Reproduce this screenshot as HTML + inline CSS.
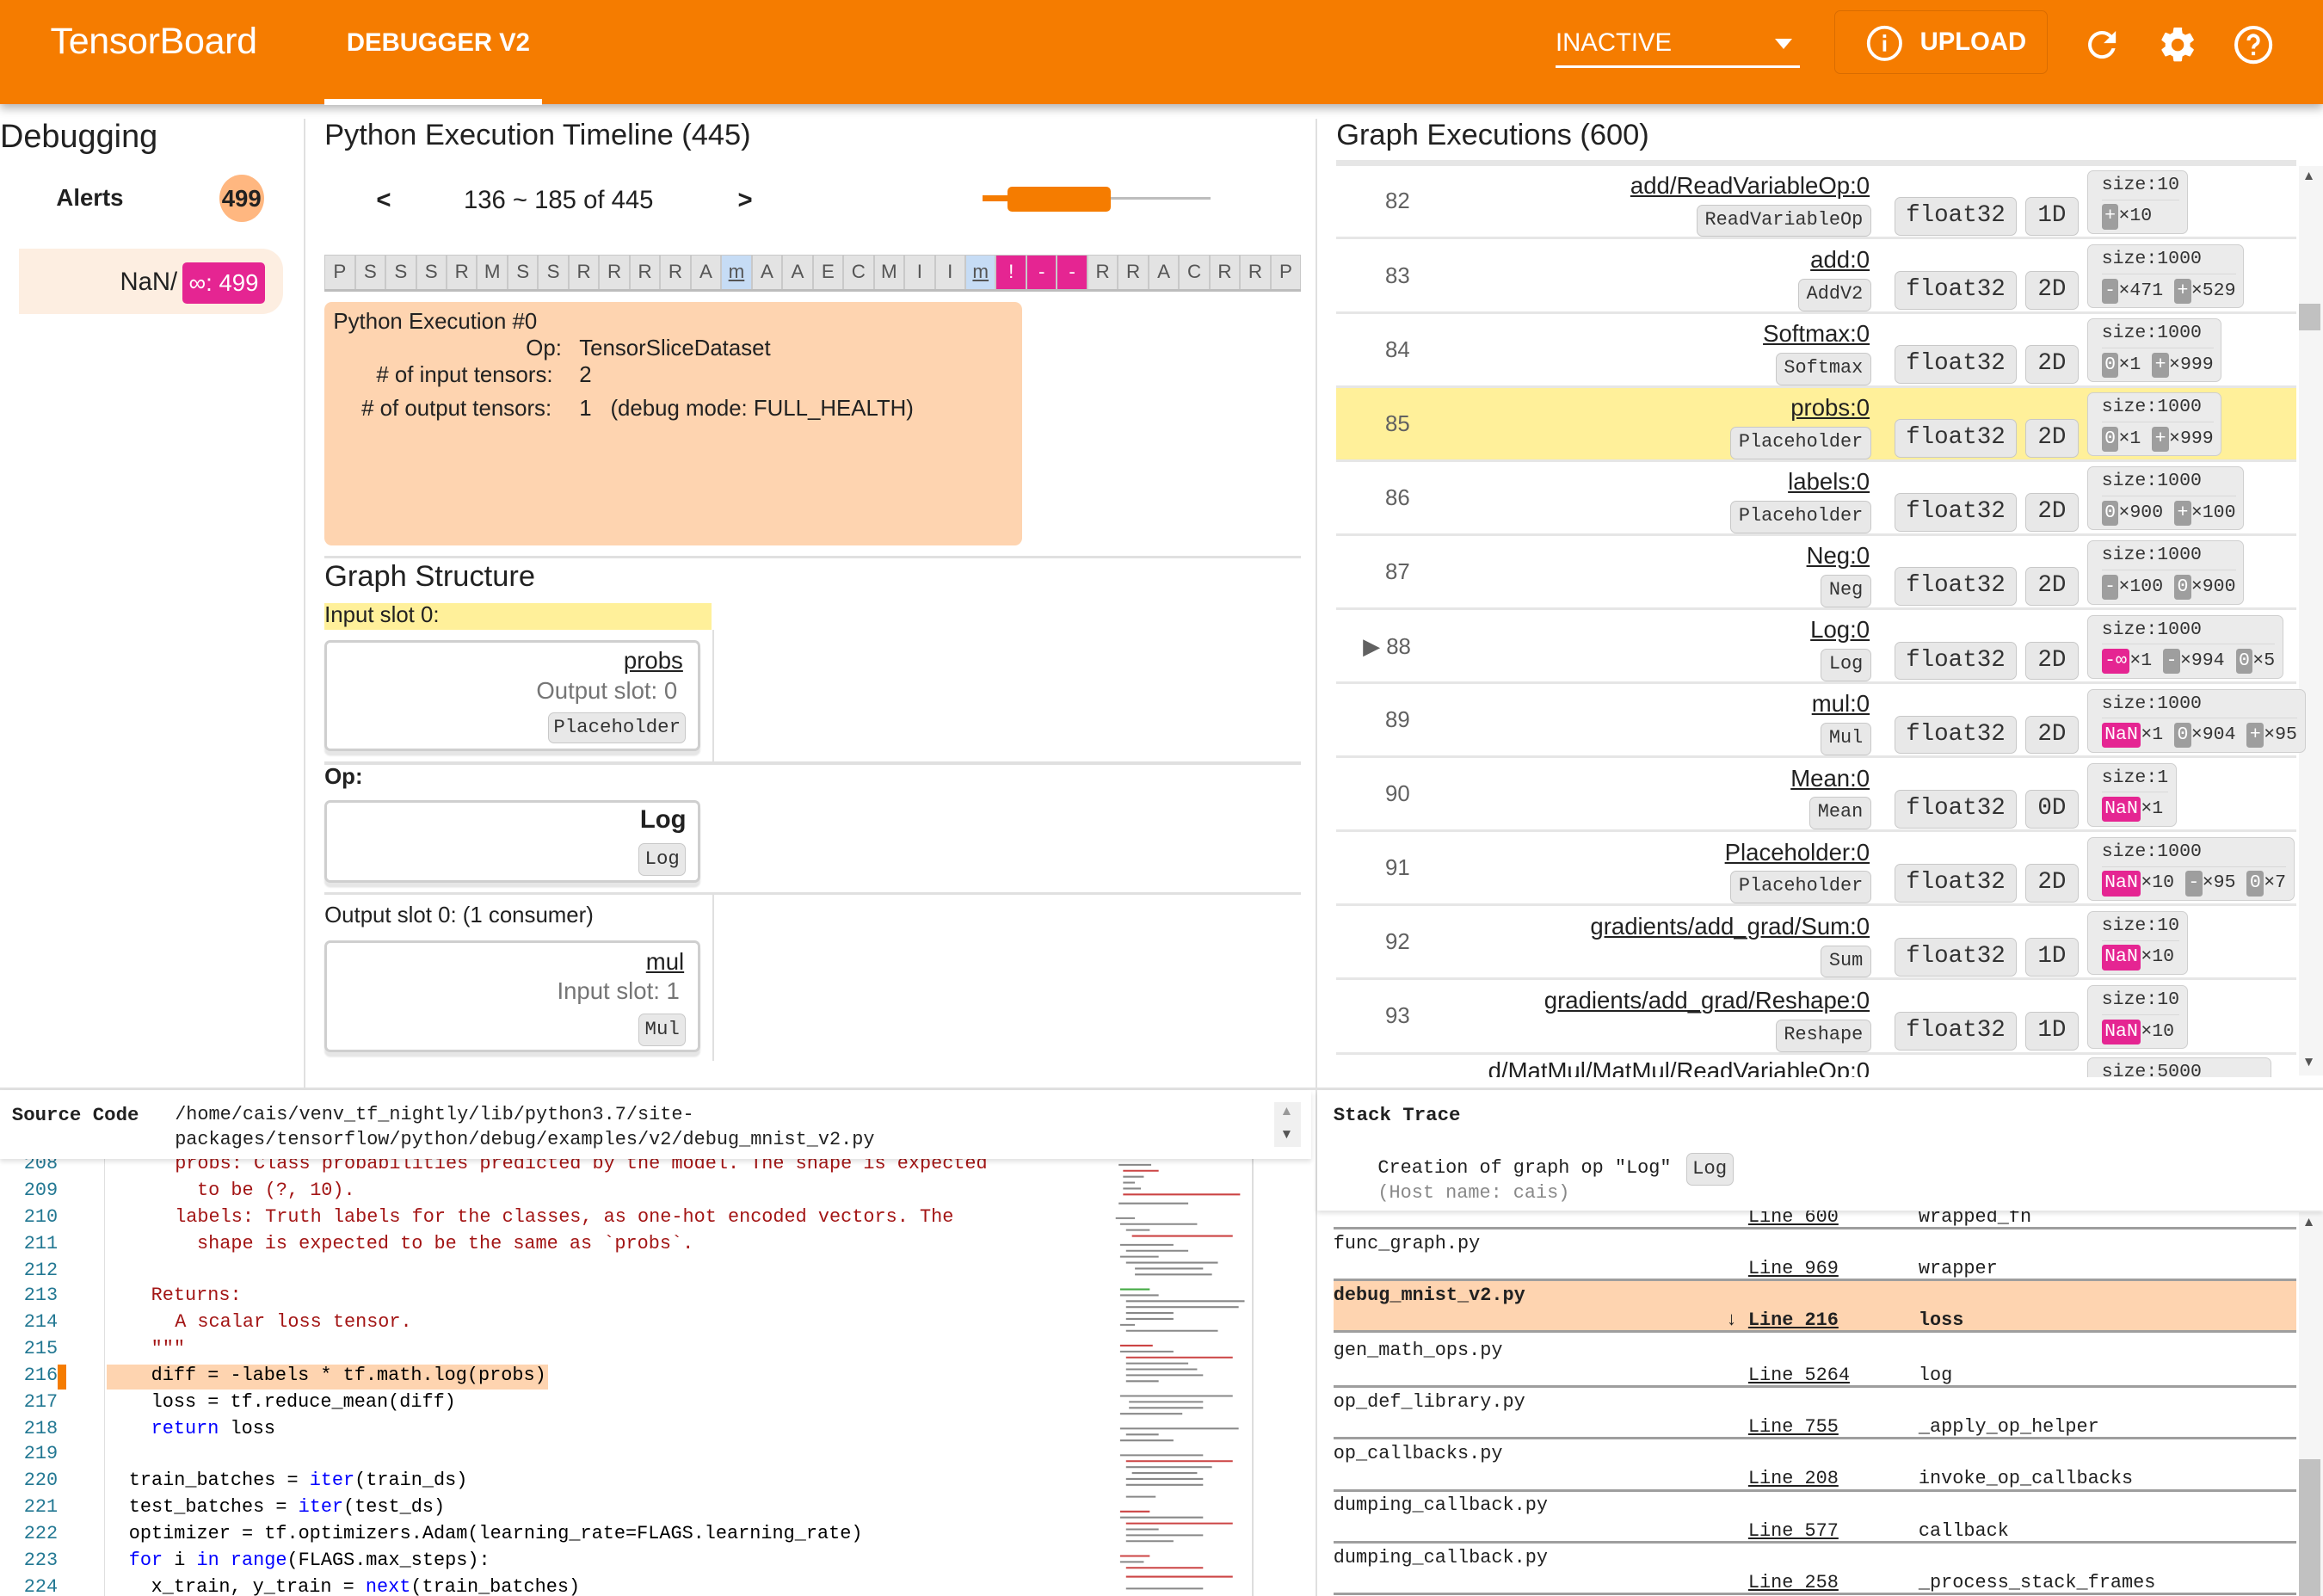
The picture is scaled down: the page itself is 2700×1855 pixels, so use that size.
<!DOCTYPE html>
<html><head><meta charset="utf-8">
<style>
html,body{margin:0;padding:0;width:2700px;height:1854px;overflow:hidden;background:#fff}
#w{position:absolute;left:0;top:0;width:1568px;height:1077px;zoom:1.72194;font-family:"Liberation Sans",sans-serif;color:#212121;overflow:hidden}
.a{position:absolute;white-space:nowrap}
.m{font-family:"Liberation Mono",monospace}
.chip{position:absolute;background:#e8e8e8;border:1px solid #c8c8c8;border-radius:4px;font-family:"Liberation Mono",monospace;color:#333;box-sizing:border-box;text-align:center;white-space:nowrap}
.u{text-decoration:underline}
.row{position:absolute;left:902px;width:648px;height:48px;border-bottom:2px solid #e6e6e6}
.row .idx{position:absolute;left:33px;top:16px;font-size:15px;color:#616161}
.row .nm{position:absolute;right:288px;top:4px;font-size:16px;text-decoration:underline;color:#212121;white-space:nowrap}
.row .op{top:26px;right:287px;height:22px;font-size:12.7px;line-height:20px;padding:0 5px}
.row .f{left:377px;top:21px;width:82px;height:26px;font-size:16px;line-height:24px}
.row .d{left:465px;top:21px;width:36px;height:26px;font-size:16px;line-height:24px}
.sz{position:absolute;left:507px;top:3px;height:43px;background:#ebebeb;border:1px solid #cfcfcf;border-radius:4px;box-sizing:border-box;font-family:"Liberation Mono",monospace;font-size:12.5px;color:#333;padding:0 5px 0 9px;white-space:nowrap}
.sz .t{height:19px;line-height:19px;border-bottom:1px solid #d8d8d8}
.sz .b{line-height:20px;margin-top:1px}
.g{display:inline-block;background:#9e9e9e;color:#fff;border-radius:2px;padding:0 2px;line-height:17px}
.p{display:inline-block;background:#e52592;color:#fff;border-radius:2px;padding:0 2px;line-height:17px}
.tl{position:absolute;top:172px;height:24px;width:20.6px;box-sizing:border-box;background:#e3e3e3;border:1px solid #c9c9c9;text-align:center;font-size:13px;line-height:22px;color:#555}
.card{position:absolute;left:219px;width:254px;background:#fff;border:2px solid #cfcfcf;border-radius:4px;box-sizing:border-box;box-shadow:0 3px 1px #e6e6e6}
.ln{position:absolute;left:0;width:39px;text-align:right;color:#237893;font-family:"Liberation Mono",monospace;font-size:12.7px}
.cd{position:absolute;font-family:"Liberation Mono",monospace;font-size:12.7px;white-space:pre;color:#000}
.r{color:#a31515}.k{color:#0000ff}
.st{position:absolute;left:900px;width:650px;height:33px;border-bottom:2px solid #9e9e9e;font-family:"Liberation Mono",monospace;font-size:12.7px}
.st .fn{position:absolute;left:0;top:2px}
.st .li{position:absolute;left:280px;top:19px;text-decoration:underline}
.st .fu{position:absolute;left:395px;top:19px}
</style></head><body><div id="w">

<!-- header -->
<div class="a" style="left:0;top:0;width:1568px;height:70px;background:#f57c00;box-shadow:0 3px 6px rgba(0,0,0,.3)"></div>
<div class="a" style="left:34px;top:14px;font-size:25px;color:#fff;letter-spacing:-0.2px">TensorBoard</div>
<div class="a" style="left:234px;top:20px;font-size:17px;color:#fff;font-weight:bold">DEBUGGER V2</div>
<div class="a" style="left:219px;top:67px;width:147px;height:4px;background:#fff"></div>
<div class="a" style="left:1050px;top:20px;font-size:17px;color:#fff">INACTIVE</div>
<div class="a" style="left:1198px;top:26px;width:0;height:0;border-left:6px solid transparent;border-right:6px solid transparent;border-top:7px solid #fff"></div>
<div class="a" style="left:1050px;top:44px;width:165px;height:2px;background:#fff"></div>
<div class="a" style="left:1238px;top:7px;width:144px;height:43px;border:1px solid #d96c00;border-radius:4px;box-sizing:border-box"></div>
<svg class="a" style="left:1259px;top:16px" width="26" height="26" viewBox="0 0 24 24"><circle cx="12" cy="12" r="10" fill="none" stroke="#fff" stroke-width="2"/><rect x="11" y="10" width="2" height="7" fill="#fff"/><rect x="11" y="6.5" width="2" height="2" fill="#fff"/></svg>
<div class="a" style="left:1296px;top:19px;font-size:17px;color:#fff;font-weight:bold">UPLOAD</div>
<svg class="a" style="left:1405px;top:16px" width="28" height="28" viewBox="0 0 24 24"><path fill="#fff" d="M17.65 6.35A7.96 7.96 0 0 0 12 4a8 8 0 1 0 7.73 10h-2.08A6 6 0 1 1 12 6c1.66 0 3.140.69 4.22 1.78L13 11h7V4l-2.35 2.35z"/></svg>
<svg class="a" style="left:1456px;top:16px" width="28" height="28" viewBox="0 0 24 24"><path fill="#fff" d="M19.14 12.94a7.1 7.1 0 0 0 0-1.88l2.03-1.58a.5.5 0 0 0 .12-.61l-1.92-3.32a.5.5 0 0 0-.59-.22l-2.39.96a7 7 0 0 0-1.62-.94l-.36-2.54A.48.48 0 0 0 13.930 2h-3.840a.48.48 0 0 0-.48.41l-.36 2.54c-.59.24-1.13.57-1.62.94l-2.39-.96a.49.49 0 0 0-.59.22L2.73 8.87a.49.49 0 0 0 .12.61l2.03 1.58a7.3 7.3 0 0 0 0 1.88l-2.03 1.58a.5.5 0 0 0-.12.61l1.92 3.32c.12.22.37.29.59.22l2.39-.96c.5.38 1.03.7 1.62.94l.36 2.54c.05.24.24.41.48.41h3.84c.24 0 .44-.17.47-.41l.36-2.54c.59-.24 1.13-.56 1.62-.94l2.39.96c.22.08.47 0 .59-.22l1.92-3.32a.49.49 0 0 0-.12-.61l-2.01-1.58zM12 15.6A3.6 3.6 0 1 1 12 8.4a3.6 3.6 0 0 1 0 7.2z"/></svg>
<svg class="a" style="left:1507px;top:16px" width="28" height="28" viewBox="0 0 24 24"><circle cx="12" cy="12" r="10" fill="none" stroke="#fff" stroke-width="2"/><path d="M9.2 9.5a2.8 2.8 0 1 1 4.3 2.3c-.9.6-1.5 1.1-1.5 2.4" fill="none" stroke="#fff" stroke-width="2"/><rect x="11" y="16" width="2" height="2" fill="#fff"/></svg>

<!-- left panel -->
<div class="a" style="left:205px;top:80px;width:1px;height:655px;background:#e0e0e0"></div>
<div class="a" style="left:0;top:80px;font-size:22px">Debugging</div>
<div class="a" style="left:38px;top:124px;font-size:16px;font-weight:bold">Alerts</div>
<div class="a" style="left:148px;top:118px;width:30px;height:32px;border-radius:50%;background:#ffb780;text-align:center;line-height:32px;font-size:16px;font-weight:bold">499</div>
<div class="a" style="left:13px;top:168px;width:178px;height:44px;background:#fdeee1;border-radius:0 14px 14px 0"></div>
<div class="a" style="left:81px;top:181px;font-size:17px">NaN/</div>
<div class="a" style="left:123px;top:177px;width:56px;height:28px;background:#e52592;border-radius:3px;color:#fff;font-size:16px;line-height:28px;text-align:center">∞: 499</div>

<!-- middle -->
<div class="a" style="left:219px;top:80px;font-size:20px">Python Execution Timeline (445)</div>
<div class="a" style="left:254px;top:126px;font-size:17px;font-weight:bold">&lt;</div>
<div class="a" style="left:313px;top:126px;font-size:17px">136 ~ 185 of 445</div>
<div class="a" style="left:498px;top:126px;font-size:17px;font-weight:bold">&gt;</div>
<div class="a" style="left:663px;top:133px;width:154px;height:2px;background:#bdbdbd"></div>
<div class="a" style="left:663px;top:132px;width:30px;height:4px;background:#f57c00"></div>
<div class="a" style="left:680px;top:126px;width:70px;height:17px;background:#f57c00;border-radius:3px"></div>

<div class="tl" style="left:219px">P</div><div class="tl" style="left:239.6px">S</div><div class="tl" style="left:260.2px">S</div><div class="tl" style="left:280.8px">S</div><div class="tl" style="left:301.4px">R</div><div class="tl" style="left:322px">M</div><div class="tl" style="left:342.6px">S</div><div class="tl" style="left:363.2px">S</div><div class="tl" style="left:383.8px">R</div><div class="tl" style="left:404.4px">R</div><div class="tl" style="left:425px">R</div><div class="tl" style="left:445.6px">R</div><div class="tl" style="left:466.2px">A</div><div class="tl" style="left:486.8px;background:#c6dcf5;text-decoration:underline">m</div><div class="tl" style="left:507.4px">A</div><div class="tl" style="left:528px">A</div><div class="tl" style="left:548.6px">E</div><div class="tl" style="left:569.2px">C</div><div class="tl" style="left:589.8px">M</div><div class="tl" style="left:610.4px">I</div><div class="tl" style="left:631px">I</div><div class="tl" style="left:651.6px;background:#c6dcf5;text-decoration:underline">m</div><div class="tl" style="left:672.2px;background:#e52592;color:#fff">!</div><div class="tl" style="left:692.8px;background:#e52592;color:#fff">-</div><div class="tl" style="left:713.4px;background:#e52592;color:#fff">-</div><div class="tl" style="left:734px">R</div><div class="tl" style="left:754.6px">R</div><div class="tl" style="left:775.2px">A</div><div class="tl" style="left:795.8px">C</div><div class="tl" style="left:816.4px">R</div><div class="tl" style="left:837px">R</div><div class="tl" style="left:857.6px">P</div>
<div class="a" style="left:219px;top:195px;width:659px;height:2px;background:#bdbdbd"></div>

<div class="a" style="left:219px;top:204px;width:471px;height:164px;background:#fed4b0;border-radius:5px"></div>
<div class="a" style="left:225px;top:209px;font-size:15px">Python Execution #0</div>
<div class="a" style="left:355px;top:227px;font-size:15px">Op:</div>
<div class="a" style="left:391px;top:227px;font-size:15px">TensorSliceDataset</div>
<div class="a" style="left:254px;top:245px;font-size:15px"># of input tensors:</div>
<div class="a" style="left:391px;top:245px;font-size:15px">2</div>
<div class="a" style="left:244px;top:268px;font-size:15px"># of output tensors:</div>
<div class="a" style="left:391px;top:268px;font-size:15px">1</div>
<div class="a" style="left:412px;top:268px;font-size:15px">(debug mode: FULL_HEALTH)</div>

<div class="a" style="left:219px;top:375px;width:659px;height:2px;background:#e0e0e0"></div>
<div class="a" style="left:219px;top:378px;font-size:20px">Graph Structure</div>
<div class="a" style="left:219px;top:407px;width:261px;height:18px;background:#fff09a"></div>
<div class="a" style="left:219px;top:407px;font-size:15px">Input slot 0:</div>
<div class="a" style="left:481px;top:425px;width:1px;height:90px;background:#e0e0e0"></div>
<div class="card" style="top:432px;height:75px"></div>
<div class="a u" style="left:421px;top:437px;font-size:16px">probs</div>
<div class="a" style="left:362px;top:457px;font-size:16px;color:#757575">Output slot: 0</div>
<div class="chip" style="left:370px;top:481px;width:93px;height:21px;font-size:13px;line-height:19px">Placeholder</div>
<div class="a" style="left:219px;top:514px;width:659px;height:2px;background:#e0e0e0"></div>
<div class="a" style="left:219px;top:516px;font-size:15px;font-weight:bold">Op:</div>
<div class="card" style="top:540px;height:56px"></div>
<div class="a" style="left:432px;top:544px;font-size:17px;font-weight:bold">Log</div>
<div class="chip" style="left:431px;top:569px;width:32px;height:22px;font-size:13px;line-height:20px">Log</div>
<div class="a" style="left:219px;top:602px;width:659px;height:2px;background:#e0e0e0"></div>
<div class="a" style="left:481px;top:604px;width:1px;height:112px;background:#e0e0e0"></div>
<div class="a" style="left:219px;top:610px;font-size:15px">Output slot 0: (1 consumer)</div>
<div class="card" style="top:635px;height:75px"></div>
<div class="a u" style="left:436px;top:640px;font-size:16px">mul</div>
<div class="a" style="left:376px;top:660px;font-size:16px;color:#757575">Input slot: 1</div>
<div class="chip" style="left:431px;top:684px;width:32px;height:22px;font-size:13px;line-height:20px">Mul</div>

<!-- right -->
<div class="a" style="left:888px;top:80px;width:1px;height:655px;background:#e0e0e0"></div>
<div class="a" style="left:902px;top:80px;font-size:20px">Graph Executions (600)</div>
<div class="a" style="left:902px;top:108px;width:648px;height:4px;background:#e6e6e6"></div>
<div class="a" style="left:1552px;top:112px;width:16px;height:614px;background:#f5f5f5"></div>
<div class="a" style="left:1552px;top:205px;width:14px;height:18px;background:#c1c1c1"></div>
<div class="a" style="left:1554px;top:114px;font-size:9px;color:#555">▲</div>
<div class="a" style="left:1554px;top:712px;font-size:9px;color:#555">▼</div>

<div class="row" style="top:112px"><span class="idx">82</span><span class="nm">add/ReadVariableOp:0</span><span class="chip op">ReadVariableOp</span><span class="chip f">float32</span><span class="chip d">1D</span><div class="sz"><div class="t">size:10</div><div class="b"><span class="g">+</span>×10</div></div></div>
<div class="row" style="top:162px"><span class="idx">83</span><span class="nm">add:0</span><span class="chip op">AddV2</span><span class="chip f">float32</span><span class="chip d">2D</span><div class="sz"><div class="t">size:1000</div><div class="b"><span class="g">-</span>×471 <span class="g">+</span>×529</div></div></div>
<div class="row" style="top:212px"><span class="idx">84</span><span class="nm">Softmax:0</span><span class="chip op">Softmax</span><span class="chip f">float32</span><span class="chip d">2D</span><div class="sz"><div class="t">size:1000</div><div class="b"><span class="g">0</span>×1 <span class="g">+</span>×999</div></div></div>
<div class="row" style="top:262px;background:#fff09a"><span class="idx">85</span><span class="nm">probs:0</span><span class="chip op">Placeholder</span><span class="chip f">float32</span><span class="chip d">2D</span><div class="sz"><div class="t">size:1000</div><div class="b"><span class="g">0</span>×1 <span class="g">+</span>×999</div></div></div>
<div class="row" style="top:312px"><span class="idx">86</span><span class="nm">labels:0</span><span class="chip op">Placeholder</span><span class="chip f">float32</span><span class="chip d">2D</span><div class="sz"><div class="t">size:1000</div><div class="b"><span class="g">0</span>×900 <span class="g">+</span>×100</div></div></div>
<div class="row" style="top:362px"><span class="idx">87</span><span class="nm">Neg:0</span><span class="chip op">Neg</span><span class="chip f">float32</span><span class="chip d">2D</span><div class="sz"><div class="t">size:1000</div><div class="b"><span class="g">-</span>×100 <span class="g">0</span>×900</div></div></div>
<div class="row" style="top:412px"><span class="idx" style="left:18px">▶ 88</span><span class="nm">Log:0</span><span class="chip op">Log</span><span class="chip f">float32</span><span class="chip d">2D</span><div class="sz"><div class="t">size:1000</div><div class="b"><span class="p">-∞</span>×1 <span class="g">-</span>×994 <span class="g">0</span>×5</div></div></div>
<div class="row" style="top:462px"><span class="idx">89</span><span class="nm">mul:0</span><span class="chip op">Mul</span><span class="chip f">float32</span><span class="chip d">2D</span><div class="sz"><div class="t">size:1000</div><div class="b"><span class="p">NaN</span>×1 <span class="g">0</span>×904 <span class="g">+</span>×95</div></div></div>
<div class="row" style="top:512px"><span class="idx">90</span><span class="nm">Mean:0</span><span class="chip op">Mean</span><span class="chip f">float32</span><span class="chip d">0D</span><div class="sz"><div class="t">size:1</div><div class="b"><span class="p">NaN</span>×1</div></div></div>
<div class="row" style="top:562px"><span class="idx">91</span><span class="nm">Placeholder:0</span><span class="chip op">Placeholder</span><span class="chip f">float32</span><span class="chip d">2D</span><div class="sz"><div class="t">size:1000</div><div class="b"><span class="p">NaN</span>×10 <span class="g">-</span>×95 <span class="g">0</span>×7</div></div></div>
<div class="row" style="top:612px"><span class="idx">92</span><span class="nm">gradients/add_grad/Sum:0</span><span class="chip op">Sum</span><span class="chip f">float32</span><span class="chip d">1D</span><div class="sz"><div class="t">size:10</div><div class="b"><span class="p">NaN</span>×10</div></div></div>
<div class="row" style="top:662px"><span class="idx">93</span><span class="nm">gradients/add_grad/Reshape:0</span><span class="chip op">Reshape</span><span class="chip f">float32</span><span class="chip d">1D</span><div class="sz"><div class="t">size:10</div><div class="b"><span class="p">NaN</span>×10</div></div></div>
<div class="a" style="left:902px;top:712px;width:648px;height:15px;overflow:hidden"><span class="a" style="right:288px;top:2px;font-size:16px;text-decoration:underline">d/MatMul/MatMul/ReadVariableOp:0</span><div class="sz" style="top:2px;width:124px"><div class="t">size:5000</div></div></div>

<!-- bottom -->
<div class="a" style="left:0;top:734px;width:1568px;height:2px;background:#e0e0e0"></div>
<div class="a" style="left:0;top:736px;width:885px;height:46px;background:#fff;box-shadow:0 2px 3px rgba(0,0,0,.12);z-index:2"></div>
<div class="a m" style="left:8px;top:745px;font-size:13px;font-weight:bold;z-index:3">Source Code</div>
<div class="a m" style="left:118px;top:745px;font-size:12.7px;z-index:3">/home/cais/venv_tf_nightly/lib/python3.7/site-</div>
<div class="a m" style="left:118px;top:762px;font-size:12.7px;z-index:3;height:15px;overflow:hidden">packages/tensorflow/python/debug/examples/v2/debug_mnist_v2.py</div>
<div class="a" style="left:860px;top:744px;width:18px;height:30px;background:#f0f0f0;z-index:3"></div>
<div class="a" style="left:864px;top:745px;font-size:9px;color:#999;z-index:3">▲</div>
<div class="a" style="left:864px;top:761px;font-size:9px;color:#555;z-index:3">▼</div>

<div class="a" style="left:70px;top:782px;width:1px;height:295px;background:#e0e0e0"></div>
<div class="a" style="left:72px;top:921px;width:298px;height:17px;background:#fed4b0"></div>
<div class="a" style="left:39px;top:921px;width:6px;height:17px;background:#f57c00"></div>
<div class="ln" style="top:778px">208</div><div class="ln" style="top:796px">209</div><div class="ln" style="top:814px">210</div><div class="ln" style="top:832px">211</div><div class="ln" style="top:850px">212</div><div class="ln" style="top:867px">213</div><div class="ln" style="top:885px">214</div><div class="ln" style="top:903px">215</div><div class="ln" style="top:921px">216</div><div class="ln" style="top:939px">217</div><div class="ln" style="top:957px">218</div><div class="ln" style="top:974px">219</div><div class="ln" style="top:992px">220</div><div class="ln" style="top:1010px">221</div><div class="ln" style="top:1028px">222</div><div class="ln" style="top:1046px">223</div><div class="ln" style="top:1064px">224</div>
<div class="cd r" style="left:118px;top:778px">probs: Class probabilities predicted by the model. The shape is expected</div>
<div class="cd r" style="left:133px;top:796px">to be (?, 10).</div>
<div class="cd r" style="left:118px;top:814px">labels: Truth labels for the classes, as one-hot encoded vectors. The</div>
<div class="cd r" style="left:133px;top:832px">shape is expected to be the same as `probs`.</div>
<div class="cd r" style="left:102px;top:867px">Returns:</div>
<div class="cd r" style="left:118px;top:885px">A scalar loss tensor.</div>
<div class="cd r" style="left:102px;top:903px">"""</div>
<div class="cd" style="left:102px;top:921px">diff = -labels * tf.math.log(probs)</div>
<div class="cd" style="left:102px;top:939px">loss = tf.reduce_mean(diff)</div>
<div class="cd" style="left:102px;top:957px"><span class="k">return</span> loss</div>
<div class="cd" style="left:87px;top:992px">train_batches = <span class="k">iter</span>(train_ds)</div>
<div class="cd" style="left:87px;top:1010px">test_batches = <span class="k">iter</span>(test_ds)</div>
<div class="cd" style="left:87px;top:1028px">optimizer = tf.optimizers.Adam(learning_rate=FLAGS.learning_rate)</div>
<div class="cd" style="left:87px;top:1046px"><span class="k">for</span> i <span class="k">in</span> <span class="k">range</span>(FLAGS.max_steps):</div>
<div class="cd" style="left:102px;top:1064px">x_train, y_train = <span class="k">next</span>(train_batches)</div>
<!-- minimap -->
<svg class="a" style="left:752px;top:782px" width="94" height="295">
<g stroke="#888" stroke-width="1.2">
<line x1="3" y1="4" x2="25" y2="4"/><line x1="6" y1="8" x2="30" y2="8" stroke="#c44"/><line x1="6" y1="12" x2="20" y2="12"/><line x1="6" y1="16" x2="14" y2="16"/><line x1="6" y1="20" x2="18" y2="20"/><line x1="6" y1="24" x2="85" y2="24" stroke="#c44"/><line x1="3" y1="30" x2="50" y2="30"/>
<line x1="1" y1="40" x2="14" y2="40"/><line x1="4" y1="44" x2="56" y2="44"/><line x1="8" y1="48" x2="24" y2="48"/><line x1="12" y1="52" x2="80" y2="52" stroke="#c44"/><line x1="4" y1="58" x2="40" y2="58"/><line x1="8" y1="62" x2="50" y2="62"/><line x1="4" y1="66" x2="30" y2="66"/><line x1="8" y1="70" x2="70" y2="70"/><line x1="14" y1="74" x2="60" y2="74"/><line x1="14" y1="78" x2="66" y2="78"/>
<line x1="4" y1="88" x2="24" y2="88" stroke="#4a4"/><line x1="4" y1="92" x2="30" y2="92"/><line x1="8" y1="96" x2="88" y2="96"/><line x1="8" y1="100" x2="84" y2="100"/><line x1="8" y1="104" x2="40" y2="104"/><line x1="8" y1="108" x2="40" y2="108"/><line x1="4" y1="112" x2="14" y2="112"/><line x1="8" y1="116" x2="70" y2="116"/>
<line x1="4" y1="126" x2="26" y2="126" stroke="#c44"/><line x1="4" y1="130" x2="40" y2="130"/><line x1="8" y1="134" x2="80" y2="134" stroke="#c44"/><line x1="8" y1="138" x2="50" y2="138"/><line x1="8" y1="142" x2="56" y2="142"/><line x1="8" y1="146" x2="60" y2="146"/><line x1="8" y1="150" x2="30" y2="150"/>
<line x1="4" y1="160" x2="80" y2="160"/><line x1="10" y1="164" x2="60" y2="164"/><line x1="10" y1="168" x2="60" y2="168"/><line x1="4" y1="172" x2="46" y2="172"/>
<line x1="4" y1="182" x2="84" y2="182"/><line x1="8" y1="186" x2="30" y2="186"/><line x1="4" y1="190" x2="40" y2="190"/>
<line x1="4" y1="200" x2="60" y2="200"/><line x1="8" y1="204" x2="80" y2="204" stroke="#c44"/><line x1="8" y1="208" x2="66" y2="208"/><line x1="12" y1="212" x2="56" y2="212"/><line x1="8" y1="216" x2="60" y2="216"/><line x1="8" y1="220" x2="60" y2="220"/><line x1="8" y1="228" x2="28" y2="228"/>
<line x1="4" y1="238" x2="24" y2="238" stroke="#c44"/><line x1="4" y1="242" x2="60" y2="242"/><line x1="8" y1="246" x2="80" y2="246" stroke="#c44"/><line x1="8" y1="250" x2="30" y2="250"/><line x1="8" y1="254" x2="60" y2="254"/><line x1="8" y1="258" x2="40" y2="258"/>
<line x1="4" y1="268" x2="24" y2="268" stroke="#c44"/><line x1="4" y1="272" x2="20" y2="272"/><line x1="8" y1="276" x2="60" y2="276" stroke="#c44"/><line x1="8" y1="282" x2="80" y2="282" stroke="#c44"/><line x1="8" y1="290" x2="60" y2="290"/>
</g></svg>
<div class="a" style="left:845px;top:782px;width:1px;height:295px;background:#ddd"></div>

<!-- stack trace -->
<div class="a" style="left:888px;top:736px;width:1px;height:341px;background:#e0e0e0"></div>
<div class="a" style="left:889px;top:736px;width:679px;height:81px;background:#fff;box-shadow:0 2px 3px rgba(0,0,0,.12);z-index:2"></div>
<div class="a m" style="left:900px;top:745px;font-size:13px;font-weight:bold;z-index:3">Stack Trace</div>
<div class="a m" style="left:930px;top:781px;font-size:12.7px;z-index:3">Creation of graph op "Log"</div>
<div class="chip" style="left:1138px;top:778px;width:32px;height:22px;font-size:13px;line-height:20px;z-index:3">Log</div>
<div class="a m" style="left:930px;top:798px;font-size:12.7px;color:#888;z-index:3">(Host name: cais)</div>
<div class="st" style="top:795px"><span class="li">Line 600</span><span class="fu">wrapped_fn</span></div>
<div class="st" style="top:830px"><span class="fn">func_graph.py</span><span class="li">Line 969</span><span class="fu">wrapper</span></div>
<div class="st" style="top:865px;background:#fed4b0;font-weight:bold;height:33px"><span class="fn">debug_mnist_v2.py</span><span class="li" style="left:265px;text-decoration:none">↓</span><span class="li">Line 216</span><span class="fu">loss</span></div>
<div class="st" style="top:902px"><span class="fn">gen_math_ops.py</span><span class="li">Line 5264</span><span class="fu">log</span></div>
<div class="st" style="top:937px"><span class="fn">op_def_library.py</span><span class="li">Line 755</span><span class="fu">_apply_op_helper</span></div>
<div class="st" style="top:972px"><span class="fn">op_callbacks.py</span><span class="li">Line 208</span><span class="fu">invoke_op_callbacks</span></div>
<div class="st" style="top:1007px"><span class="fn">dumping_callback.py</span><span class="li">Line 577</span><span class="fu">callback</span></div>
<div class="st" style="top:1042px"><span class="fn">dumping_callback.py</span><span class="li">Line 258</span><span class="fu">_process_stack_frames</span></div>
<div class="a" style="left:1552px;top:818px;width:16px;height:259px;background:#f5f5f5"></div>
<div class="a" style="left:1552px;top:985px;width:14px;height:92px;background:#c1c1c1"></div>
<div class="a" style="left:1554px;top:820px;font-size:9px;color:#555">▲</div>
</div></body></html>
